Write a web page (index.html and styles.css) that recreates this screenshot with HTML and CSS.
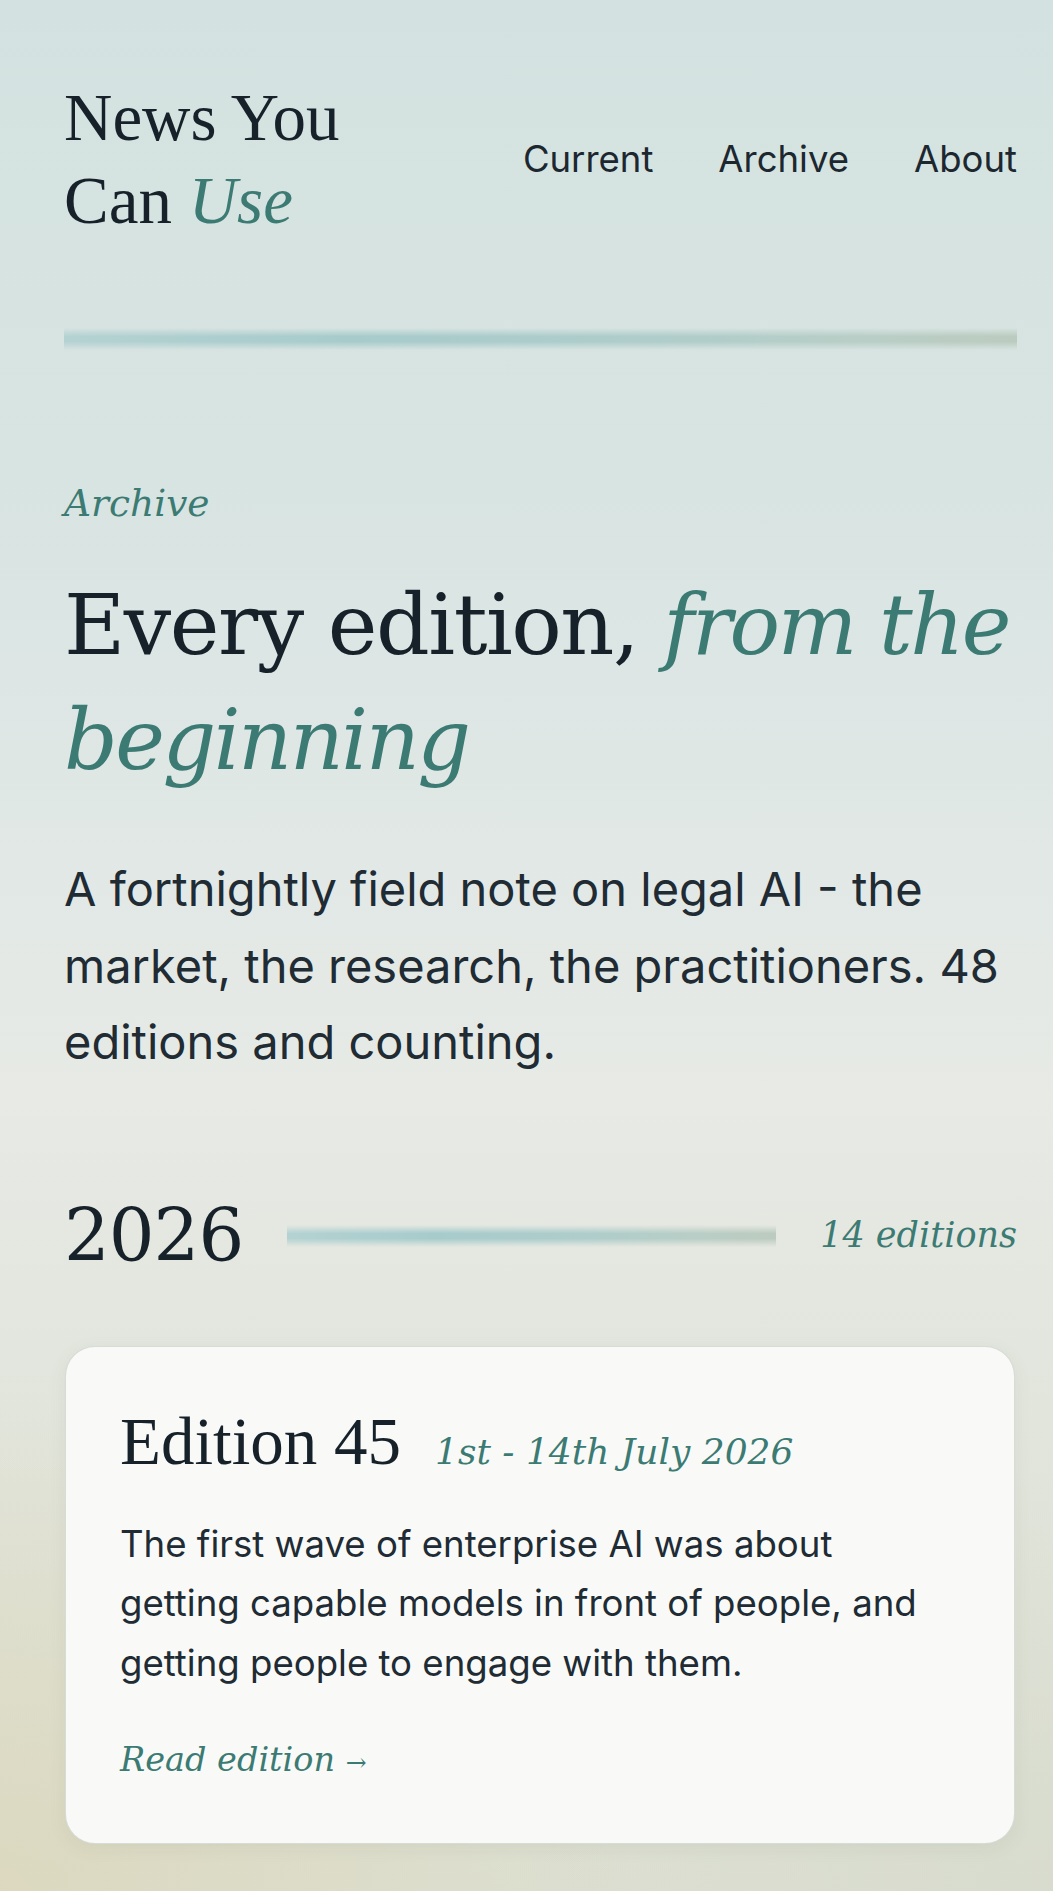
FILE: index.html
```html
<!DOCTYPE html>
<html lang="en">
<head>
<meta charset="utf-8">
<title>Archive — News You Can Use</title>
<link rel="stylesheet" href="styles.css">
</head>
<body>
<div class="page">
  <header class="site-header">
    <a class="logo" href="#">News You<br>Can <em>Use</em></a>
    <nav class="nav">
      <a href="#">Current</a>
      <a href="#">Archive</a>
      <a href="#">About</a>
    </nav>
  </header>
  <div class="rule"></div>

  <main>
    <p class="eyebrow">Archive</p>
    <h1 class="title">Every edition, <em>from the</em> <em>beginning</em></h1>
    <p class="lede">A fortnightly field note on legal AI - the market, the research, the practitioners. 48 editions and counting.</p>

    <section class="year">
      <div class="year-head">
        <h2 class="year-num">2026</h2>
        <div class="year-bar"></div>
        <span class="year-count">14 editions</span>
      </div>

      <article class="card">
        <div class="card-head">
          <h3 class="card-title">Edition 45</h3>
          <span class="card-date">1st - 14th July 2026</span>
        </div>
        <p class="card-text">The first wave of enterprise AI was about getting capable models in front of people, and getting people to engage with them.</p>
        <a class="card-link" href="#">Read edition <span class="arrow">→</span></a>
      </article>
    </section>
  </main>
</div>
</body>
</html>
```

FILE: styles.css
```css
html, body {
  margin: 0;
  padding: 0;
}

body {
  min-height: 1891px;
  background:
    radial-gradient(ellipse 900px 700px at 0% 100%, rgba(220, 216, 190, 0.9), rgba(220, 216, 190, 0) 70%),
    radial-gradient(ellipse 800px 600px at 100% 100%, rgba(214, 218, 204, 0.7), rgba(214, 218, 204, 0) 70%),
    linear-gradient(180deg, #d3e2e0 0%, #d8e4e2 25%, #e1e8e6 45%, #e7eae5 58%, #e2e5dc 75%, #dcdfd1 100%);
  color: #1f2a33;
  font-family: "Inter", "Liberation Sans", sans-serif;
}

a {
  color: inherit;
  text-decoration: none;
}

.page {
  padding: 76px 36px 40px 64px;
}

.site-header {
  display: flex;
  justify-content: space-between;
  align-items: center;
}

.logo {
  font-family: "Liberation Serif", "DejaVu Serif", serif;
  font-size: 67px;
  line-height: 83px;
  color: #16212a;
}

.logo em {
  color: #3c7b73;
  font-style: italic;
}

.nav {
  display: flex;
  gap: 65px;
  font-size: 36.5px;
  line-height: 40px;
  color: #1c2730;
}

.rule,
.year-bar {
  height: 22px;
  background: linear-gradient(90deg, #b4d2d2 0%, #a7cbcb 30%, #aecdcb 60%, #b9cec6 85%, #bccbbf 100%);
  -webkit-mask-image: linear-gradient(180deg, transparent 0%, #000 38%, #000 62%, transparent 100%);
  mask-image: linear-gradient(180deg, transparent 0%, #000 38%, #000 62%, transparent 100%);
}

.rule {
  margin-top: 86px;
}

.eyebrow {
  margin: 132px 0 0;
  font-family: "DejaVu Serif", serif;
  font-style: italic;
  font-size: 37.5px;
  line-height: 43px;
  color: #3c7b73;
}

.title {
  margin: 43px 0 0;
  font-family: "DejaVu Serif", serif;
  font-weight: normal;
  font-size: 84px;
  line-height: 115px;
  letter-spacing: -1.5px;
  color: #16212a;
}

.title em {
  color: #3c7b73;
  font-style: italic;
  letter-spacing: -2.5px;
}

.lede {
  margin: 53px 0 0;
  font-size: 47px;
  line-height: 76.5px;
  color: #202b34;
}

.year {
  margin-top: 119px;
}

.year-head {
  display: flex;
  align-items: center;
  gap: 44px;
}

.year-num {
  margin: 0;
  font-family: "DejaVu Serif", serif;
  font-weight: normal;
  font-size: 72px;
  line-height: 72px;
  letter-spacing: -1px;
  color: #16212a;
}

.year-bar {
  flex: 1;
}

.year-count {
  font-family: "DejaVu Serif", serif;
  font-style: italic;
  font-size: 35px;
  line-height: 35px;
  color: #3c7b73;
}

.card {
  margin: 74px 2px 0 1px;
  padding: 54px 80px 61px 54px;
  background: #f9faf8;
  border: 1px solid rgba(200, 206, 200, 0.7);
  border-radius: 30px;
  box-shadow: 0 4px 18px rgba(90, 100, 80, 0.08);
}

.card-head {
  display: flex;
  align-items: baseline;
  gap: 34px;
}

.card-title {
  margin: 0;
  font-family: "Liberation Serif", "DejaVu Serif", serif;
  font-weight: normal;
  font-size: 67px;
  line-height: 80px;
  white-space: nowrap;
  color: #16212a;
}

.card-date {
  font-family: "DejaVu Serif", serif;
  font-style: italic;
  font-size: 36px;
  white-space: nowrap;
  color: #3c7b73;
}

.card-text {
  margin: 34px 0 0;
  font-size: 36.6px;
  line-height: 59.84px;
  color: #202b34;
}

.card-link {
  display: inline-block;
  margin-top: 47px;
  font-family: "DejaVu Serif", serif;
  font-style: italic;
  font-size: 33.5px;
  line-height: 38px;
  color: #3c7b73;
}

.arrow {
  font-style: normal;
  font-size: 25px;
}
```
